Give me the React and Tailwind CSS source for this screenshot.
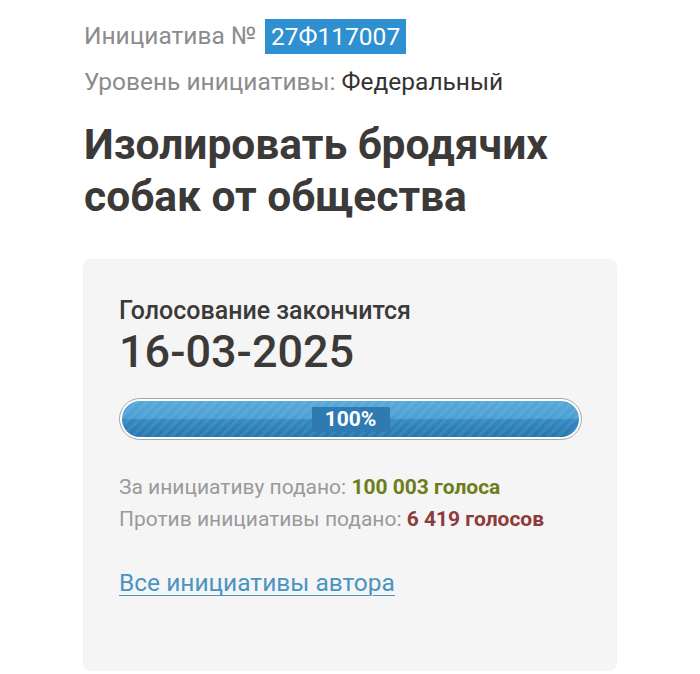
export default function App() {
  return (
    <div className="w-[700px] h-[674px] bg-white overflow-hidden font-['Roboto',sans-serif]">
      <div className="pl-[84px] pr-[40px] pt-[19px]">
        <div className="flex items-center h-[35px] text-[24.5px] text-[#8c8c8c]">
          <span>Инициатива №</span>
          <span className="ml-[9px] bg-[#2e8fd1] text-white h-[35px] leading-[35px] px-[6px]">27Ф117007</span>
        </div>
        <div className="mt-[13px] text-[24.5px] leading-[30px] text-[#8c8c8c]">
          Уровень инициативы: <span className="text-[#333333]">Федеральный</span>
        </div>
        <h1 className="mt-[22px] text-[42.5px] leading-[52px] font-bold text-[#3b3a39]">
          Изолировать бродячих<br />собак от общества
        </h1>
      </div>
      <div className="ml-[83px] w-[534px] h-[412px] mt-[36px] bg-[#f5f5f5] rounded-[8px] px-[36px] pt-[37px]">
        <div className="text-[25px] leading-[30px] font-medium text-[#3b3a39]">Голосование закончится</div>
        <div className="mt-[1px] text-[45px] leading-[50px] font-medium text-[#3b3a39]">16-03-2025</div>
        <div className="mt-[21px] w-[463px] h-[42px] rounded-full border border-[#a8a8a8] bg-white p-[2px]">
          <div className="relative h-full rounded-full overflow-hidden bg-[linear-gradient(to_bottom,#56a9d9_0%,#4c9fd2_48%,#3589c2_52%,#2777b0_100%)]">
            <div className="absolute inset-0 bg-[repeating-linear-gradient(-45deg,rgba(255,255,255,0.07)_0px,rgba(255,255,255,0.07)_3px,transparent_3px,transparent_7px)]" />
            <div className="absolute inset-0 flex items-center justify-center">
              <div className="w-[78px] h-[25px] bg-[#2f7bb1] text-white text-[21px] font-bold leading-[25px] text-center">100%</div>
            </div>
          </div>
        </div>
        <div className="mt-[31px] text-[21px] leading-[32px] text-[#9a9a9a]">
          <div>
            За инициативу подано: <span className="font-bold text-[#6e7d1c]">100 003 голоса</span>
          </div>
          <div>
            Против инициативы подано: <span className="font-bold text-[#8e3b3b]">6 419 голосов</span>
          </div>
        </div>
        <div className="mt-[33px] text-[24.5px] leading-[30px]">
          <a className="text-[#4b94bf] underline underline-offset-[4px] decoration-1">Все инициативы автора</a>
        </div>
      </div>
    </div>
  );
}
